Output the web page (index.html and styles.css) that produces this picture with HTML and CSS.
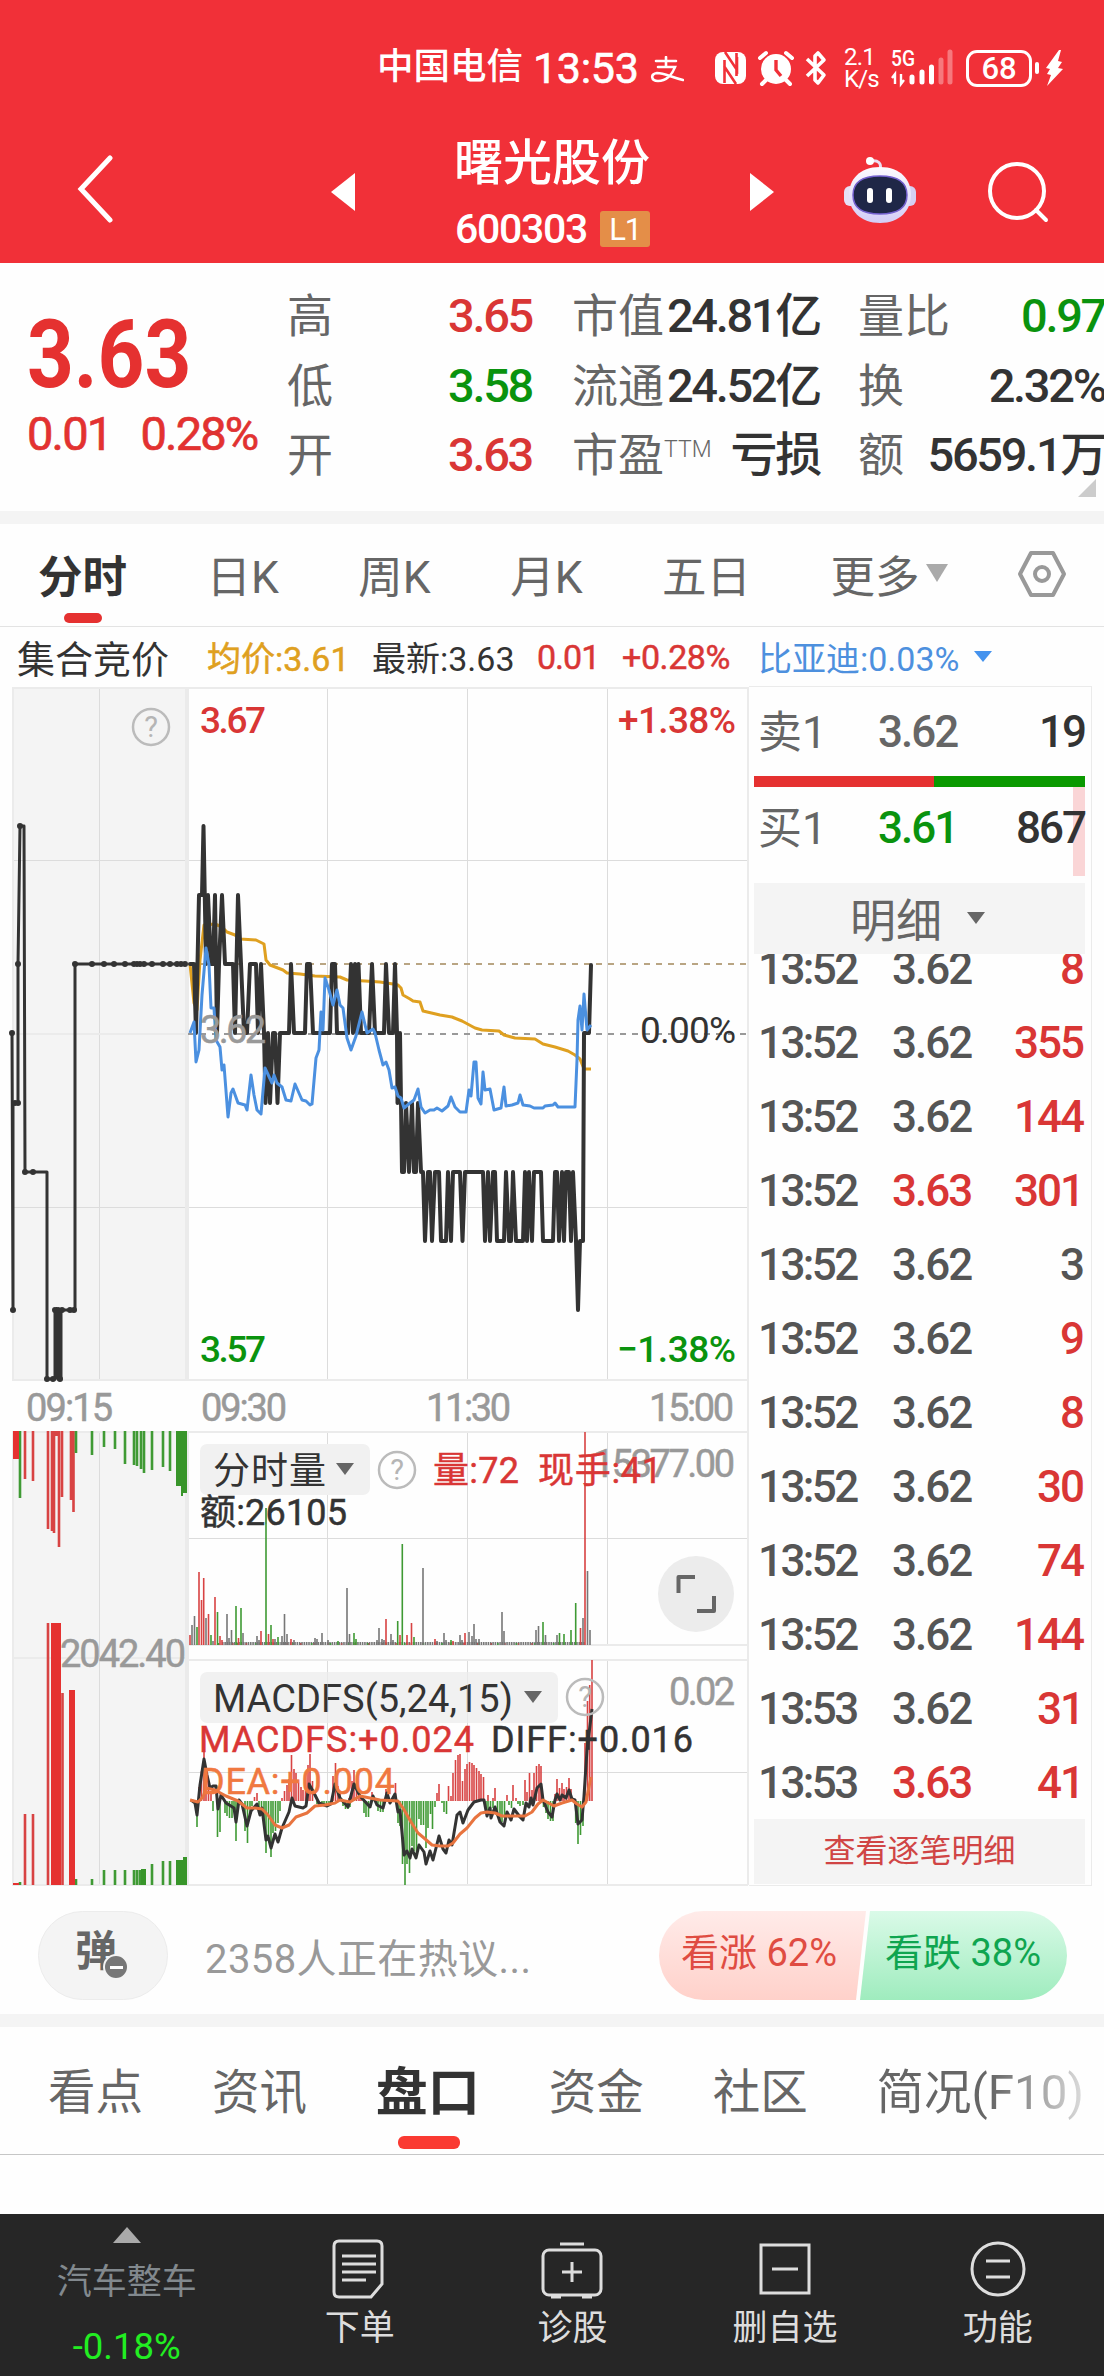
FILE: index.html
```
<!DOCTYPE html>
<html lang="zh-CN">
	<head>
		<meta charset="UTF-8" />
		<meta name="viewport" content="width=device-width, initial-scale=1.0" />
		<link rel="stylesheet" href="styles.css">
		<title>曙光股份 600303</title>
	</head>
	<body>
		<header class="top">
			<div class="status">
				<span class="carrier">中国电信</span>
				<span class="clock">13:53</span>
				<svg class="pay" width="34" height="28" viewBox="0 0 34 28" fill="none" stroke="#fff" stroke-width="2.600" stroke-linecap="round">
					<path d="M6 5h20M16 1v9M8 11h17c-3 8-9 14-17 14-7 0-8-7-1-8 7 0 14 4 26 7" />
				</svg>
				<svg class="status-icons" width="116" height="40" viewBox="0 0 116 40" fill="none">
					<rect x="1" y="4" width="31" height="32" rx="8" fill="#fff" />
					<path d="M10.500 35V12M11 4l12 18V9M22.500 5v23M22 36L10 18" stroke="#f13038" stroke-width="2.600" />
					<circle cx="62" cy="21" r="15" fill="#fff" />
					<path d="M62 12v10l5 6" stroke="#f13038" stroke-width="3.400" />
					<path d="M46 10l6-5M72 5l6 5M52 32l-4 4M72 32l4 4" stroke="#fff" stroke-width="4" stroke-linecap="round" />
					<path d="M93 11l17 16-6 8-3-3V8l3-3 6 7-17 16" stroke="#fff" stroke-width="3.600" stroke-linejoin="round" />
				</svg>
				<div class="speed"><span>2.1</span><span>K/s</span></div>
				<svg class="signal" width="64" height="42" viewBox="0 0 64 42">
					<text x="0" y="19" font-size="22" textLength="24" lengthAdjust="spacingAndGlyphs" fill="#fff" font-weight="500">5G</text>
					<path d="M4 37V27l-3 4M10 27v10l3-4" stroke="#fff" stroke-width="2.4" fill="none" />
					<path d="M21 35V30M31 35V25M40.500 35V20" stroke="#fff" stroke-width="5" stroke-linecap="round" />
					<path d="M50 35V13M59 35V5" stroke="#fff" stroke-opacity=".35" stroke-width="5" stroke-linecap="round" />
				</svg>
				<span class="battery">68</span>
				<svg class="bolt" width="24" height="38" viewBox="0 0 24 38" fill="#fff">
					<rect x="0" y="13" width="4" height="12" rx="2" />
					<path d="M24 1L11 19l4 1-3 5 4 1-4 11 16-17-5-1 4-6-4-1 3-11z" transform="translate(0 0)" />
				</svg>
			</div>
			<div class="nav">
				<svg class="back" width="36" height="68" viewBox="0 0 36 68"><path d="M33 3L4 34l29 31" /></svg>
				<svg class="prev" width="24" height="38" viewBox="0 0 24 38"><path d="M24 0v38L0 19z" fill="#fff" /></svg>
				<div class="title">
					<h1>曙光股份</h1>
					<div class="code">600303 <span class="level">L1</span></div>
				</div>
				<svg class="next" width="24" height="38" viewBox="0 0 24 38"><path d="M0 0v38l24-19z" fill="#fff" /></svg>
				<svg class="robot" width="74" height="68" viewBox="0 0 74 68">
					<defs>
						<linearGradient id="shell" x1="0" y1="0" x2="0" y2="1">
							<stop offset="0" stop-color="#fdfbff" />
							<stop offset="1" stop-color="#d3cdf6" />
						</linearGradient>
					</defs>
					<path d="M37 14c2-7-2-10-9-9" fill="none" stroke="#eadff2" stroke-width="3" />
					<circle cx="27" cy="5" r="4" fill="#fff" />
					<rect x="1" y="30" width="14" height="20" rx="6" fill="#e6e0f6" />
					<rect x="59" y="30" width="14" height="20" rx="6" fill="#d5cff2" />
					<path d="M37 11c21 0 31 13 31 28S57 67 37 67 6 54 6 39s10-28 31-28z" fill="url(#shell)" />
					<path d="M37 20c21 0 27 8 27 19s-6 19-27 19-27-8-27-19 6-19 27-19z" fill="#1f2747" stroke="#7461cf" stroke-width="1.500" />
					<rect x="24" y="32" width="6" height="15" rx="3" fill="#fff" />
					<rect x="43" y="32" width="6" height="15" rx="3" fill="#fff" />
				</svg>
				<svg class="search" width="62" height="62" viewBox="0 0 62 62"><circle cx="29" cy="30" r="27" /><path d="M48 49l10 10" /></svg>
			</div>
		</header>

		<section class="quote">
			<div class="last">
				<div class="price">3.63</div>
				<div class="change"><span>0.01</span><span>0.28%</span></div>
			</div>
			<dl class="stats first">
				<div><dt>高</dt><dd class="up">3.65</dd></div>
				<div><dt>低</dt><dd class="down">3.58</dd></div>
				<div><dt>开</dt><dd class="up">3.63</dd></div>
			</dl>
			<dl class="stats second">
				<div><dt>市值</dt><dd>24.81亿</dd></div>
				<div><dt>流通</dt><dd>24.52亿</dd></div>
				<div><dt>市盈<sup>TTM</sup></dt><dd>亏损</dd></div>
			</dl>
			<dl class="stats third">
				<div><dt>量比</dt><dd class="down">0.97</dd></div>
				<div><dt>换</dt><dd>2.32%</dd></div>
				<div><dt>额</dt><dd>5659.1万</dd></div>
			</dl>
			<i class="corner"></i>
		</section>

		<nav class="periods">
			<span class="active">分时</span>
			<span>日K</span>
			<span>周K</span>
			<span>月K</span>
			<span>五日</span>
			<span class="more">更多<i></i></span>
			<svg width="50" height="48" viewBox="0 0 50 48" fill="none" stroke="#999" stroke-width="4" stroke-linejoin="round"><path d="M14 3h22l11 21-11 21H14L3 24z" /><circle cx="25" cy="24" r="7" /></svg>
		</nav>

		<div class="legend">
			<span class="auction">集合竞价</span>
			<span class="avg">均价:3.61</span>
			<span class="now">最新:3.63</span>
			<span class="diff">0.01</span>
			<span class="pct">+0.28%</span>
			<span class="peer">比亚迪:0.03%<i></i></span>
		</div>

		<main class="market">
			<svg class="chart" width="749" height="1206" viewBox="0 680 749 1206">
				<!-- call auction background -->
				<path d="M12 687h176v693H12zM12 1432h176v453H12z" fill="#f4f4f4" />

				<!-- grid -->
				<g class="grid">
					<path d="M12 860.500H748M12 1207.500H748M188 1538.500H748M188 1772.500H748" />
					<path d="M99.500 687V1380M99.500 1432V1885M327.500 687V1380M467.500 687V1380M607.500 687V1380" />
					<path d="M327.500 1432V1645M467.500 1432V1645M607.500 1432V1645M327.500 1660V1885M467.500 1660V1885M607.500 1660V1885" />
				</g>
				<g class="frame">
					<path d="M12 688H748M12 1034H188M12 1380H748M12 1432H748M12 1658H188M188 1645H748M188 1660H748M12 1885H748" />
					<path d="M13 687V1380M13 1432V1885M748 687V1885" />
					<path d="M187 687V1380M187 1432V1885" stroke-width="4" />
				</g>
				<path d="M188 964H748" stroke="#b9a583" stroke-width="2" stroke-dasharray="6 6" />
				<path d="M188 1034H748" stroke="#999" stroke-width="2" stroke-dasharray="6 6" />

				<!-- auction price -->
				<path class="auction-line" d="M12 1033L13 1310V1103H18V964L20 826H24L25 1172H47V1379H55V1310H58V1379H61V1310H75V964H187" />
				<path class="dots" d="M12 1033h0M13 1310h0M15 1103h0M18 1103h0M18 964h0M20 826h0M25 1172h0M33 1172h0M47 1379h0M53 1379h0M60 1379h0M55 1310h0M58 1310h0M62 1310h0M70 1310h0M74 1310h0M75 964h0M92 964h0M104 964h0M114 964h0M125 964h0M134 964h0M137 964h0M140 964h0M144 964h0M152 964h0M163 964h0M170 964h0M177 964h0M181 964h0M185 964h0" />

				<!-- intraday: average, price, peer -->
				<polyline class="avg-line" points="190,964 194,1003 197,1010 200,960 204,925 215,924 222,927 227,932 235,935 240,939 256,940 264,944 266,960 270,965 283,970 287,973 300,974 315,976 340,977 347,980 365,981 380,982 393,984 398,985 401,988 403,995 410,999 413,1001 420,1002 423,1011 440,1015 452,1017 462,1021 475,1028 482,1030 499,1031 504,1035 515,1038 535,1039 543,1044 555,1047 568,1051 575,1055 580,1059 584,1069 591,1069" />
				<polyline class="price-line" points="190,964 194,964 196,1033 199,895 202,895 203.5,826 206,964 208,895 211,964 213,964 215,895 217,1033 219,964 222,895 225,964 233,964 235,1033 238,895 241,964 244,1033 247,1033 250,964 256,964 258,1033 261,964 264,1033 265.5,1103 268,1033 270,1103 273,1033 275,1033 277.500,1103 280,1033 289,1033 291,964 294,1033 305,1033 307,964 310,964 313,1033 330,1033 332,964 335,964 337,1033 348,1033 351,964 353,1033 355,964 357,1033 358.500,964 361,1033 369,1033 372,964 375,1033 384,1033 386,964 389,1033 393,1033 395,964 397,1033 397.500,1103 400,1033 402,1172 404,1172 406,1103 409,1172 412,1103 414,1172 416,1172 418,1103 421,1172 423,1172 425,1241 428,1172 430,1172 432,1241 435,1172 439,1172 441,1241 446,1241 448,1172 451,1241 453,1172 460,1172 462.500,1241 465,1172 483,1172 485,1241 488,1172 490,1241 493,1172 495,1172 497,1241 504,1241 506,1172 509,1241 511,1241 513,1172 516,1241 523,1241 525,1172 527,1241 529,1172 532,1241 534,1172 541,1172 543,1241 553,1241 555,1172 557,1172 559,1241 562,1172 564,1241 566,1172 569,1172 571,1241 573,1172 576,1241 578,1310 580,1241 583,1241 584,1033 589,1033 591,965" />
				<polyline class="peer-line" points="190,1033 194,1022 196,1062 199,1050 202,995 206,948 209,965 211,1008 214,1008 216,1040 220,1047 222,1070 224,1065 228,1117 231,1093 233,1089 238,1103 245,1105 247,1110 251,1075 254,1095 257,1110 261,1114 265,1068 272,1083 274,1075 277,1083 282,1087 286,1100 291,1101 295,1084 302,1100 306,1101 310,1105 312,1104 316,1058 319,1050 321,1012 323,1030 325,978 329,990 333,1005 337,990 340,1005 343,1008 347,1038 351,1050 356,1036 362,1012 367,1033 373,1029 375,1033 379,1050 383,1065 386,1062 389,1070 392,1088 395,1087 398,1096 401,1098 404,1108 410,1103 414,1100 418,1089 421,1107 425,1113 430,1110 434,1110 437,1108 442,1111 448,1106 451,1097 455,1107 460,1112 466,1112 469,1090 471,1096 474,1062 476,1062 478,1098 481,1104 483,1072 485,1090 490,1089 494,1110 501,1108 504,1087 506,1106 512,1105 518,1103 520,1095 523,1105 530,1106 534,1108 543,1108 545,1106 553,1105 555,1103 558,1107 575,1107 577,1060 578,1020 580,1006 582,1030 584,994 587,1030 591,1025" />

				<g class="axis">
					<text x="200" y="733" textLength="66" class="up">3.67</text>
					<text x="618" y="733" textLength="118" class="up">+1.38%</text>
					<text x="200" y="1043" textLength="66" class="muted">3.62</text>
					<text x="640" y="1043" textLength="96" class="zero">0.00%</text>
					<text x="200" y="1362" textLength="66" class="down">3.57</text>
					<text x="617" y="1362" textLength="119" class="down">−1.38%</text>
					<text x="26" y="1421" textLength="87" class="muted">09:15</text>
					<text x="201" y="1421" textLength="86" class="muted">09:30</text>
					<text x="426" y="1421" textLength="85" class="muted">11:30</text>
					<text x="649" y="1421" textLength="85" class="muted">15:00</text>
				</g>

				<!-- auction volume -->
				<g class="bars auction-bars">
					<path class="red" d="M25 1431V1479M33 1431V1481M48 1431V1529M52 1431V1531M54 1431V1533M56.500 1431V1436M59 1431V1547M62 1431V1497M71 1431V1500M73.500 1431V1512M25 1885V1814M33 1885V1814M48 1885V1623M62.500 1885V1693" />
					<path class="green" d="M20 1431V1498M76 1431V1453M92 1431V1455M104 1431V1447M115 1431V1449M125 1431V1464M134 1431V1465M137 1431V1466M141 1431V1469M144 1431V1473M152 1431V1470M163 1431V1467M170 1431V1471M20 1885V1882M76 1885V1879M92 1885V1879M104 1885V1870M115 1885V1870M125 1885V1870M134 1885V1870M137 1885V1870M140 1885V1870M152 1885V1864M163 1885V1861M170 1885V1861" />
					<path fill="#e53130" d="M13 1431h6v28h-6zM51 1623h10v262h-10zM69 1690h6v195h-6zM13 1883h6v2h-6z" />
					<path fill="#38952a" d="M176 1431h5v55h-5zM181 1431h2v65h-2zM183 1431h4v62h-4zM141 1869h5v16h-5zM176 1860h7v25h-7zM183 1857h4v28h-4z" />
				</g>
				<text class="muted number" x="60" y="1667" textLength="126">2042.40</text>

				<!-- volume -->
				<path d="M222 1643.500H585" stroke="#777" stroke-width="3" stroke-dasharray="1.600 .73" />
				<path d="M232 1644H560" stroke="#a55" stroke-width="2" stroke-dasharray="1.600 12" />
				<path d="M218 1644H560" stroke="#494" stroke-width="2" stroke-dasharray="1.600 17" />
				<g class="bars">
					<path class="gray" d="M192 1645v-20M194.500 1645v-29M206 1645v-27M213 1645v-4M227 1645v-31M229 1645v-7M231.500 1645v-15M243 1645v-12M257 1645v-9M259 1645v-5M275 1645v-6M282 1645v-9M284.500 1645v-31M287 1645v-11M294 1645v-5M315 1645v-7M317 1645v-6M322 1645v-12M328 1645v-5M347 1645v-57M349.500 1645v-11M377 1645v-5M379 1645v-17M382 1645v-6M384 1645v-5M391 1645v-11M393 1645v-5M423 1645v-77M437 1645v-4M444 1645v-12M446 1645v-5M460 1645v-10M462 1645v-5M469 1645v-13M472 1645v-9M474 1645v-21M476 1645v-6M479 1645v-6M502 1645v-33M504 1645v-14M536 1645v-15M538.500 1645v-19M545.500 1645v-10M557 1645v-10M583 1645v-27M587.500 1645v-74M590 1645v-15" />
					<path class="red" d="M190 1645v-10M199 1645v-73M201.500 1645v-45M203.700 1645v-67M208.500 1645v-31M215 1645v-48M220 1645v-9M222 1645v-5M238.500 1645v-7M261 1645v-14M268.500 1645v-11M273 1645v-6M291 1645v-6M386 1645v-26M400 1645v-10M407 1645v-10M411.500 1645v-22M435 1645v-6M453 1645v-4M465 1645v-12M580.500 1645v-17M585 1645v-213" />
					<path class="green" d="M197 1645v-18M211 1645v-10M217.500 1645v-33M236 1645v-39M241 1645v-37M266 1645v-137M271 1645v-20M278 1645v-8M338 1645v-4M354 1645v-12M356 1645v-6M397.700 1645v-24M402.300 1645v-101M414 1645v-8M451 1645v-5M543 1645v-23M559.500 1645v-12M564 1645v-11M571 1645v-15M575.700 1645v-42" />
				</g>
				<g class="tag">
					<rect x="200" y="1444" width="170" height="51" rx="7" />
					<text x="213" y="1484" font-size="37" textLength="113">分时量</text>
					<path d="M336 1463h18l-9 12z" />
				</g>
				<text x="593" y="1477" textLength="142" class="muted number">15377.00</text>
				<g class="readout">
					<text x="433" y="1483" textLength="86" class="up">量:72</text>
					<text x="538" y="1483" textLength="124" class="up">现手:41</text>
					<text x="200" y="1525" textLength="147">额:26105</text>
				</g>
				<path d="M266 1524V1508" stroke="#5d9a52" stroke-width="1.600" />
				<g class="help">
					<circle cx="151" cy="727" r="18" /><text x="151" y="737">?</text>
					<circle cx="397" cy="1470" r="18" /><text x="397" y="1480">?</text>
				</g>
				<circle cx="696" cy="1594" r="38" fill="#ececec" />
				<path d="M678.500 1593V1577H695M714 1596V1611H697" fill="none" stroke="#666" stroke-width="4" stroke-linejoin="round" />

				<!-- MACD -->
				<g class="bars macd">
					<path class="red" d="M199 1801v-14M201.500 1801v-30M204 1801v-52M206 1801v-30M208.500 1801v-20M211 1801v-10M254.500 1801v-4M257 1801v-8M282 1801v-3M284.500 1801v-10M287 1801v-16M289 1801v-22M291.500 1801v-46M294 1801v-32M296 1801v-28M298.500 1801v-18M301 1801v-14M303 1801v-11M305.500 1801v-10M308 1801v-36M310 1801v-47M312.500 1801v-20M333 1801v-25M335.500 1801v-38M338 1801v-15M340 1801v-8M349 1801v-3M352 1801v-20M354 1801v-31M356.500 1801v-18M359 1801v-12M361 1801v-6M372 1801v-9M386 1801v-12M395.500 1801v-18M437 1801v-8M439 1801v-17M448.500 1801v-15M451 1801v-5M453 1801v-28M455.500 1801v-41M458 1801v-46M460 1801v-47M462.500 1801v-20M465 1801v-32M467 1801v-37M469.500 1801v-39M472 1801v-38M474 1801v-36M476.500 1801v-33M479 1801v-30M481 1801v-27M483.500 1801v-24M488 1801v-6M493 1801v-3M495 1801v-13M507 1801v-6M513 1801v-16M516 1801v-3M525 1801v-21M527 1801v-9M529.500 1801v-28M532 1801v-11M534 1801v-28M536.500 1801v-35M539 1801v-37M541 1801v-35M555 1801v-7M557 1801v-22M559.500 1801v-13M562 1801v-18M564 1801v-12M566.500 1801v-14M569 1801v-23M571 1801v-12M585 1801v-58M587.500 1801v-100M589.700 1801v-116M592 1801v-141" />
					<path class="green" d="M197 1801v26M213 1801v10M217.500 1801v36M220 1801v31M225 1801v12M227 1801v15M229.500 1801v17M232 1801v17M234 1801v9M236 1801v40M245 1801v30M247.500 1801v42M250 1801v12M252 1801v5M259 1801v10M261.500 1801v8M264 1801v20M266 1801v52M268.500 1801v35M271 1801v56M273 1801v32M275.500 1801v30M278 1801v22M280 1801v10M317 1801v3M319 1801v4M322 1801v5M324 1801v5M326.500 1801v4M329 1801v4M343 1801v5M345.500 1801v8M348 1801v8M350 1801v6M364 1801v12M366 1801v16M368.500 1801v16M371 1801v5M378 1801v10M380.500 1801v11M383 1801v11M398 1801v22M400 1801v25M402.500 1801v63M405 1801v84M407 1801v63M409.500 1801v72M412 1801v45M414 1801v50M416.500 1801v55M419 1801v18M421 1801v24M423.500 1801v24M426 1801v47M428 1801v27M430.500 1801v13M432.500 1801v28M435 1801v6M442 1801v2M444 1801v11M446.500 1801v13M486 1801v8M488 1801v9M490.500 1801v14M493 1801v7M497.500 1801v15M500 1801v20M502 1801v21M504.500 1801v17M509 1801v4M511.500 1801v7M518 1801v3M520 1801v5M523 1801v4M543.500 1801v6M546 1801v12M548 1801v18M550.500 1801v20M553 1801v20M575.700 1801v22M578 1801v43M580.500 1801v34M583 1801v25" />
				</g>
				<g class="tag">
					<rect x="200" y="1672" width="358" height="51" rx="7" />
					<text x="213" y="1712" font-size="38" textLength="300">MACDFS(5,24,15)</text>
					<path d="M524 1691h18l-9 12z" />
				</g>
				<path class="grid" d="M327.500 1672V1723M467.500 1672V1723" opacity=".4" />
				<g class="readout">
					<text x="199" y="1752" textLength="275" class="up">MACDFS:+0.024</text>
					<text x="491" y="1752" textLength="202">DIFF:+0.016</text>
				</g>
				<text x="669" y="1705" textLength="66" class="muted number">0.02</text>
				<polyline class="diff-line" points="191,1800 195,1803 197,1815 200,1785 204,1759 207,1775 210,1788 213,1786 216,1786 218,1809 221,1795 226,1803 234,1808 236,1822 239,1800 242,1804 247,1826 251,1811 257,1804 260,1815 262,1808 266,1840 268,1836 271,1848 275,1834 278,1842 282,1828 289,1812 292,1798 295,1806 303,1808 306,1806 309,1784 314,1793 319,1803 327,1806 331,1804 335,1784 340,1798 348,1807 354,1784 360,1796 370,1807 373,1796 377,1805 383,1808 387,1793 390,1803 395,1794 398,1812 400,1810 404,1855 407,1851 410,1858 412,1849 416,1858 419,1845 424,1852 426,1864 430,1851 433,1860 439,1836 443,1849 446,1853 449,1840 452,1845 457,1815 460,1812 463,1823 468,1810 474,1802 481,1800 484,1800 487,1816 490,1808 491,1818 495,1807 500,1822 504,1826 507,1812 511,1820 514,1809 520,1817 523,1820 526,1803 529,1807 531,1798 533,1805 537,1788 541,1784 543,1800 548,1812 552,1817 555,1800 557,1794 560,1800 562,1795 566,1798 569,1790 572,1799 575,1800 578,1824 582,1820 584,1796 587,1750 592,1709" />
				<polyline class="dea-line" points="190,1800 198,1802 203,1797 206,1788 215,1790 226,1796 238,1801 247,1808 255,1808 262,1809 268,1815 275,1825 282,1828 289,1825 296,1817 307,1813 315,1806 325,1805 335,1803 340,1800 350,1802 360,1796 380,1800 398,1801 403,1808 411,1822 418,1833 424,1838 432,1845 440,1846 448,1846 453,1843 460,1834 467,1828 475,1818 481,1813 487,1812 495,1813 502,1816 515,1816 525,1816 532,1812 538,1804 543,1800 554,1806 562,1803 572,1800 577,1804 582,1807 586,1802 591,1777" />
				<text class="dea" x="201" y="1794" textLength="194">DEA:+0.004</text>
				<g class="help"><circle cx="585" cy="1697" r="18" /><text x="585" y="1707">?</text></g>
			</svg>

			<aside class="book">
				<div class="level-row"><span>卖1</span><b>3.62</b><em>19</em></div>
				<div class="ratio"><i></i></div>
				<div class="level-row buy"><span>买1</span><b class="down">3.61</b><em>867</em></div>
				<div class="detail-head">明细<i></i></div>
				<div class="ticks">
					<div><span>13:52</span><b>3.62</b><em class="up">8</em></div>
					<div><span>13:52</span><b>3.62</b><em class="up">355</em></div>
					<div><span>13:52</span><b>3.62</b><em class="up">144</em></div>
					<div><span>13:52</span><b class="up">3.63</b><em class="up">301</em></div>
					<div><span>13:52</span><b>3.62</b><em>3</em></div>
					<div><span>13:52</span><b>3.62</b><em class="up">9</em></div>
					<div><span>13:52</span><b>3.62</b><em class="up">8</em></div>
					<div><span>13:52</span><b>3.62</b><em class="up">30</em></div>
					<div><span>13:52</span><b>3.62</b><em class="up">74</em></div>
					<div><span>13:52</span><b>3.62</b><em class="up">144</em></div>
					<div><span>13:53</span><b>3.62</b><em class="up">31</em></div>
					<div><span>13:53</span><b class="up">3.63</b><em class="up">41</em></div>
				</div>
				<div class="detail-link">查看逐笔明细</div>
			</aside>
		</main>

		<section class="talk">
			<div class="barrage">弹<i></i></div>
			<span class="hint">2358人正在热议...</span>
			<div class="vote">
				<span class="bull">看涨 62%</span>
				<span class="bear">看跌 38%</span>
			</div>
		</section>

		<nav class="tabs">
			<span>看点</span>
			<span>资讯</span>
			<span class="active">盘口</span>
			<span>资金</span>
			<span>社区</span>
			<span class="fade">简况(F10)</span>
		</nav>

		<footer class="dock">
			<div class="sector">
				<i></i>
				<span>汽车整车</span>
				<b>-0.18%</b>
			</div>
			<div class="item">
				<svg width="62" height="62" viewBox="0 0 62 62"><path d="M10 3h38q5 0 5 5v38L42 59H10q-5 0-5-5V8q0-5 5-5z" /><path d="M13 18h34M13 26h34M13 34h34M13 42h24" /></svg>
				<span>下单</span>
			</div>
			<div class="item">
				<svg width="62" height="62" viewBox="0 0 62 62"><rect x="2" y="12" width="58" height="45" rx="6" /><path d="M19 6h24M31 24v20M21 34h20M10 59h10M41 59h10" /></svg>
				<span>诊股</span>
			</div>
			<div class="item">
				<svg width="62" height="62" viewBox="0 0 62 62"><path d="M7 7h48v48H7zM18 31h26" /></svg>
				<span>删自选</span>
			</div>
			<div class="item">
				<svg width="62" height="62" viewBox="0 0 62 62"><circle cx="31" cy="31" r="26" /><path d="M19 23h24M19 39h24" /></svg>
				<span>功能</span>
			</div>
		</footer>
	</body>
</html>
```
FILE: styles.css
```
* {
	box-sizing: border-box;
}

body {
	margin: 0;
	width: 1104px;
	height: 2376px;
	display: flex;
	flex-direction: column;
	background-color: #fefefe;
	color: #333;
	font-family: Roboto, "Noto Sans CJK SC", sans-serif;
	overflow: hidden;
}

.up {
	color: #d93635;
	fill: #d93635;
}

.down {
	color: #0a930e;
	fill: #0a930e;
}

.muted {
	fill: #999;
}

/* header */
.top {
	height: 263px;
	background-color: #f13038;
	color: #fff;
}

.status {
	display: flex;
	align-items: center;
	height: 136px;
	padding-left: 377px;
	font-weight: 500;
	white-space: nowrap;
}

.carrier {
	width: 156px;
	font-size: 36.5px;
	line-height: 40px;
	padding-bottom: 3px;
}

.clock {
	width: 117px;
	font-size: 43px;
	font-weight: 400;
	letter-spacing: -0.3px;
	-webkit-text-stroke: 0.6px #fff;
}

.pay {
	margin: 3px 30px 0 0;
}

.status-icons {
	width: 116px;
}

.speed {
	width: 47px;
	margin-left: 14px;
	display: flex;
	flex-direction: column;
	font-size: 24px;
	font-weight: 400;
	line-height: 22px;
	letter-spacing: -0.8px;
}

.signal {
	margin-left: 0;
}

.battery {
	width: 66px;
	height: 37px;
	margin-left: 11px;
	border: 3px solid #fff;
	border-radius: 11px;
	font-size: 31px;
	line-height: 32px;
	text-align: center;
}

.bolt {
	margin-left: 3px;
	overflow: visible;
}

.nav {
	display: flex;
	align-items: flex-start;
	height: 127px;
}

.back {
	margin: 19px 0 0 77px;
	fill: none;
	stroke: #fff;
	stroke-width: 5;
	stroke-linecap: round;
}

.prev {
	margin: 37px 0 0 218px;
}

.title {
	width: 195px;
	margin-left: 100px;
}

.title h1 {
	margin: 1px 0 0 -1px;
	font-size: 49px;
	font-weight: 500;
	line-height: 54px;
	white-space: nowrap;
}

.code {
	display: flex;
	align-items: center;
	justify-content: space-between;
	height: 36px;
	margin-top: 20px;
	font-size: 41px;
	font-weight: 500;
	letter-spacing: -1.3px;
}

.level {
	width: 50px;
	height: 36px;
	border-radius: 3px;
	background-color: #e48e48;
	font-size: 31px;
	font-weight: 400;
	line-height: 37px;
	text-align: center;
}

.next {
	margin: 37px 0 0 100px;
}

.robot {
	margin: 20px 0 0 69px;
}

.search {
	margin: 25px 0 0 71px;
	fill: none;
	stroke: #fff;
	stroke-width: 4;
	stroke-linecap: round;
}

/* quote */
.quote {
	position: relative;
	display: flex;
	height: 248px;
	padding-top: 18px;
}

.last {
	width: 287px;
	padding-left: 27px;
	color: #e53130;
}

.price {
	height: 110px;
	margin-top: 20px;
	font-size: 95px;
	font-weight: 700;
	line-height: 108px;
	transform: scaleX(0.86);
	transform-origin: left;
}

.change {
	display: flex;
	gap: 29px;
	font-size: 47px;
	line-height: 46px;
	letter-spacing: -1.8px;
	white-space: nowrap;
	-webkit-text-stroke: 0.7px #d93635;
}

.stats {
	margin: 0;
	font-size: 47px;
	line-height: 70px;
	letter-spacing: -2.3px;
	white-space: nowrap;
}

.stats div {
	display: flex;
	justify-content: space-between;
	height: 69.5px;
}

.stats dt {
	color: #666;
	font-size: 46px;
	letter-spacing: 0;
}

.stats dd {
	margin: 0 -1px 0 0;
	font-weight: 500;
}

.stats sup {
	position: relative;
	top: -14px;
	font-size: 23px;
	font-weight: 300;
	line-height: 0;
	vertical-align: baseline;
}

.first {
	width: 244px;
}

.second {
	width: 247px;
	margin-left: 41px;
}

.third {
	width: 246px;
	margin-left: 39px;
}

.corner {
	position: absolute;
	right: 8px;
	bottom: 14px;
	border-left: 18px solid transparent;
	border-bottom: 18px solid #ccc;
}

/* period tabs */
.periods {
	display: flex;
	align-items: center;
	justify-content: space-between;
	height: 116px;
	padding: 0 37px 4px 38px;
	border-top: 13px solid #f4f4f4;
	border-bottom: 1px solid #e3e3e3;
	color: #666;
	font-size: 44.5px;
}

.periods svg {
	margin: 2px 0 0 -10px;
}

.periods .active {
	position: relative;
	color: #333;
	font-weight: 700;
}

.periods .active::after {
	content: "";
	position: absolute;
	left: 26px;
	bottom: -17px;
	width: 38px;
	height: 10px;
	border-radius: 5px;
	background-color: #e53130;
}

.more {
	display: flex;
	align-items: center;
	gap: 6px;
}

.more i {
	border: 11px solid transparent;
	border-top: 18px solid #aaa;
	border-bottom: 0;
}

/* chart legend */
.legend {
	display: flex;
	align-items: center;
	height: 53px;
	padding: 6px 0 0 17px;
	font-size: 34px;
	white-space: nowrap;
}

.auction {
	width: 190px;
	font-size: 38px;
}

.avg {
	width: 165px;
	color: #dfa020;
	-webkit-text-stroke: 0.5px #dfa020;
}

.now {
	width: 165px;
}

.diff {
	width: 85px;
	color: #d93635;
	letter-spacing: -1px;
}

.pct {
	width: 136px;
	color: #d93635;
	letter-spacing: -0.4px;
}

.diff,
.pct {
	-webkit-text-stroke: 0.5px #d93635;
}

.peer {
	display: flex;
	align-items: center;
	gap: 15px;
	color: #4d90de;
}

.peer i {
	border: 9px solid transparent;
	border-top: 11px solid #4593ee;
	border-bottom: 0;
}

/* chart */
.market {
	display: flex;
	height: 1206px;
}

.chart {
	flex: none;
	font-size: 36px;
	fill: #333;
}

.grid {
	fill: none;
	stroke: #dcdcdc;
	stroke-width: 1;
}

.frame {
	fill: none;
	stroke: #ebebeb;
	stroke-width: 2;
}

.axis {
	font-size: 37px;
	font-weight: 500;
}

.axis .muted,
.axis .zero {
	font-weight: 400;
}

.number,
.axis .muted {
	font-size: 38px;
	stroke: #999;
	stroke-width: 0.5;
}

.readout {
	stroke-width: 0.5;
	stroke: #333;
}

.readout .up {
	stroke: #d93635;
}

.auction-line,
.price-line,
.avg-line,
.peer-line,
.diff-line,
.dea-line {
	fill: none;
	stroke: #333;
	stroke-width: 3;
	stroke-linejoin: round;
}

.price-line {
	stroke-width: 4;
	stroke-linecap: round;
}

.avg-line {
	stroke: #dfa020;
}

.peer-line {
	stroke: #4b90e0;
}

.dea-line {
	stroke: #e8743f;
}

.dots {
	stroke: #333;
	stroke-width: 6;
	stroke-linecap: round;
}

.bars {
	fill: none;
	stroke-width: 1.6;
}

.auction-bars {
	stroke-width: 2.6;
}

.red {
	stroke: #d84343;
}

.green {
	stroke: #3f9a34;
}

.gray {
	stroke: #777;
}

.tag rect {
	fill: #f1f1f1;
}

.tag path {
	fill: #666;
}

.dea {
	fill: #f07840;
	stroke: #f07840;
	stroke-width: 0.5;
}

.help circle {
	fill: none;
	stroke: #bbb;
	stroke-width: 2.5;
}

.help text {
	fill: #b5b5b5;
	font-size: 29px;
	text-anchor: middle;
}

/* order book */
.book {
	width: 343px;
	height: 1200px;
	margin-top: 6px;
	padding: 0 6px 0 5px;
	border: 1px solid #ebebeb;
	border-left: 0;
	font-size: 44px;
}

.book b,
.book em {
	font-style: normal;
	font-weight: 500;
	letter-spacing: -2px;
}

.level-row,
.ticks div {
	display: grid;
	grid-template-columns: 120px 1fr auto;
	align-items: center;
	padding: 0 0 0 4px;
}

.level-row {
	height: 89px;
}

.level-row span,
.level-row b:not(.down) {
	color: #666;
}

.level-row span {
	margin-top: -5px;
}

.ratio {
	height: 11px;
	background-color: #0a9900;
}

.ratio i {
	display: block;
	width: 180px;
	height: 11px;
	background-color: #e53130;
}

.buy {
	height: 89px;
	padding-bottom: 8px;
	background: linear-gradient(#fad5d6, #fad5d6) right / 12px 100% no-repeat;
}

.detail-head {
	display: flex;
	align-items: center;
	justify-content: center;
	gap: 25px;
	height: 71px;
	margin-top: 7px;
	padding: 0 4px 4px 0;
	background-color: #f4f4f4;
	color: #666;
	font-size: 46px;
}

.detail-head i {
	margin-top: 3px;
	border: 9px solid transparent;
	border-top: 12px solid #666;
	border-bottom: 0;
}

.ticks {
	display: flex;
	flex-direction: column;
	justify-content: flex-end;
	height: 865px;
	color: #555;
	overflow: hidden;
}

.ticks div {
	position: relative;
	top: 1px;
	flex: none;
	grid-template-columns: 134px 1fr auto;
	height: 74px;
	padding-right: 2px;
}

.ticks span {
	font-weight: 500;
	letter-spacing: -2.6px;
}

.detail-link {
	height: 65px;
	background-color: #f4f4f4;
	color: #d04545;
	font-size: 32px;
	line-height: 64px;
	text-align: center;
}

/* discussion */
.talk {
	display: flex;
	align-items: center;
	height: 141px;
	padding: 11px 37px 0 38px;
	border-bottom: 13px solid #f4f4f4;
}

.barrage {
	position: relative;
	width: 130px;
	height: 89px;
	padding-left: 36px;
	border: 1px solid #ececec;
	border-radius: 45px;
	background-color: #f4f4f4;
	color: #666;
	font-size: 42px;
	font-weight: 700;
	line-height: 80px;
}

.barrage i {
	position: absolute;
	left: 64px;
	top: 42px;
	width: 26px;
	height: 26px;
	border: 2px solid #f4f4f4;
	border-radius: 50%;
	background: linear-gradient(#fff, #fff) center / 13px 3px no-repeat #777;
}

.hint {
	margin-left: 37px;
	color: #999;
	font-size: 40px;
	letter-spacing: 0.4px;
}

.vote {
	display: flex;
	margin-left: auto;
	font-size: 38px;
	line-height: 85px;
	white-space: nowrap;
}

.vote span {
	width: 207px;
	height: 89px;
}

.bull {
	padding-left: 22px;
	border-radius: 45px 0 0 45px;
	background: linear-gradient(#ffebe9, #ffd1ca);
	clip-path: polygon(0 0, 100% 0, 197px 100%, 0 100%);
	color: #df4c42;
}

.bear {
	margin-left: -6px;
	padding-left: 25px;
	border-radius: 0 45px 45px 0;
	background: linear-gradient(#dafae8, #9fecbe);
	clip-path: polygon(10px 0, 100% 0, 100% 100%, 0 100%);
	color: #0fa550;
}

/* content tabs */
.tabs {
	display: flex;
	align-items: center;
	justify-content: space-between;
	height: 128px;
	padding: 0 20px 5px 48px;
	border-bottom: 1px solid #c6c6c6;
	color: #666;
	font-size: 47.5px;
	white-space: nowrap;
}

.tabs .active {
	position: relative;
	color: #333;
	font-size: 52px;
	font-weight: 700;
}

.tabs .active::after {
	content: "";
	position: absolute;
	left: 22px;
	bottom: -23px;
	width: 62px;
	height: 13px;
	border-radius: 6px;
	background-color: #fa3a32;
}

.tabs .fade {
	background: linear-gradient(90deg, #666 55%, #ddd);
	background-clip: text;
	color: transparent;
}

/* bottom dock */
.dock {
	display: flex;
	height: 162px;
	margin-top: auto;
	background-color: #262626;
	color: #ddd;
	font-size: 35px;
	line-height: 40px;
}

.sector {
	display: flex;
	flex-direction: column;
	align-items: center;
	width: 254px;
	padding-top: 13px;
	color: #82898e;
}

.sector i {
	border: 14px solid transparent;
	border-top: 0;
	border-bottom: 16px solid #aaa;
}

.sector span {
	margin-top: 20px;
}

.sector b {
	margin-top: 24px;
	color: #22ee22;
	font-size: 36.5px;
	font-weight: 400;
}

.item {
	display: flex;
	flex-direction: column;
	align-items: center;
	width: 213px;
	padding-top: 24px;
}

.item svg {
	fill: none;
	stroke: #ddd;
	stroke-width: 3;
}

.item span {
	margin-top: 9px;
}
```
